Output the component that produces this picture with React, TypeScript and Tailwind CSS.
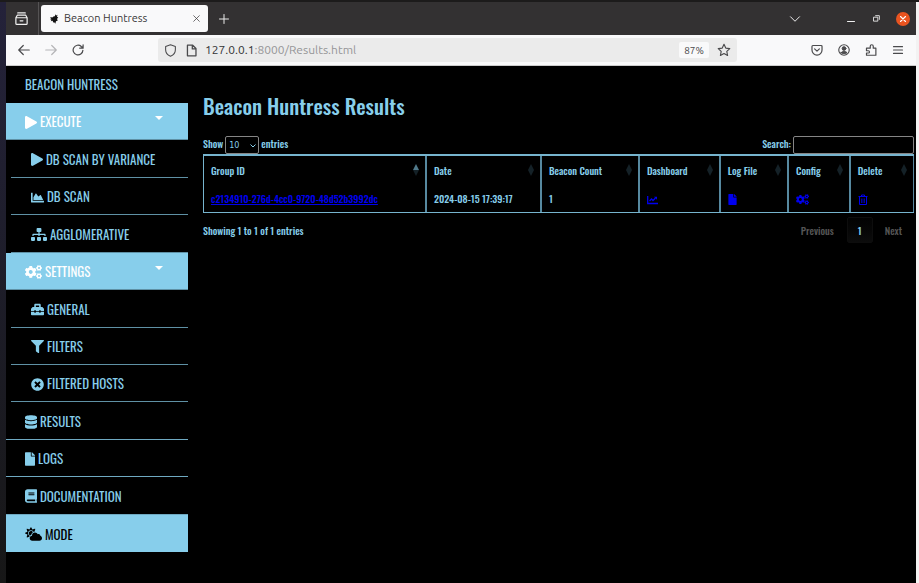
import type { ReactNode } from "react";
import {
  FaPlay, FaChartArea, FaSitemap, FaCogs, FaToolbox, FaFilter, FaTimesCircle,
  FaDatabase, FaFile, FaBook, FaCloudSun,
} from "react-icons/fa";

const condensed = "font-['Oswald','Liberation_Sans_Narrow','DejaVu_Sans_Condensed',sans-serif]";

type Item = { label: string; icon: ReactNode; kind: "top" | "sub" | "group" | "mode" };

const items: Item[] = [
  { label: "EXECUTE", icon: <FaPlay className="h-[13px] w-3" preserveAspectRatio="none" />, kind: "group" },
  { label: "DB SCAN BY VARIANCE", icon: <FaPlay className="h-[13px] w-3" preserveAspectRatio="none" />, kind: "sub" },
  { label: "DB SCAN", icon: <FaChartArea className="size-[13px]" />, kind: "sub" },
  { label: "AGGLOMERATIVE", icon: <FaSitemap className="h-[13px] w-4" />, kind: "sub" },
  { label: "SETTINGS", icon: <FaCogs className="h-[14px] w-[17px]" />, kind: "group" },
  { label: "GENERAL", icon: <FaToolbox className="size-[13px]" />, kind: "sub" },
  { label: "FILTERS", icon: <FaFilter className="size-[13px]" />, kind: "sub" },
  { label: "FILTERED HOSTS", icon: <FaTimesCircle className="size-[13px]" />, kind: "sub" },
  { label: "RESULTS", icon: <FaDatabase className="h-[14px] w-3" />, kind: "top" },
  { label: "LOGS", icon: <FaFile className="h-[14px] w-[10px]" />, kind: "top" },
  { label: "DOCUMENTATION", icon: <FaBook className="h-[14px] w-3" />, kind: "top" },
  { label: "MODE", icon: <FaCloudSun className="h-[14px] w-[17px]" />, kind: "mode" },
];

const rowStyle = {
  top: "border-b border-[#6fa9c1] pl-[19px] text-[#87ceeb]",
  sub: "ml-[5px] border-b border-[#5f91a5] pl-5 text-[#87ceeb]",
  group: "border-b border-[#5f91a5] bg-[#87ceeb] pl-[19px] text-white",
  mode: "bg-[#87ceeb] pl-[19px] text-black",
};

const columns = [
  { name: "Group ID", width: "w-[31.4%]" },
  { name: "Date", width: "w-[16.2%]" },
  { name: "Beacon Count", width: "w-[13.8%]" },
  { name: "Dashboard", width: "w-[11.4%]" },
  { name: "Log File", width: "w-[9.6%]" },
  { name: "Config", width: "w-[8.7%]" },
  { name: "Delete", width: "w-[8.9%]" },
];

function Glyph({ children, className = "size-4" }: { children: ReactNode; className?: string }) {
  return (
    <svg viewBox="0 0 16 16" className={className} fill="none" stroke="currentColor" strokeWidth="1.3" strokeLinecap="round" strokeLinejoin="round" aria-hidden="true">
      {children}
    </svg>
  );
}

function TabBar() {
  return (
    <div className="flex h-[33px] items-center bg-[#333132] text-[#f0f0f0]">
      <button aria-label="Recent browsing" className="ml-[7px] flex size-4 items-center justify-center">
        <Glyph className="size-[15px]">
          <path d="M4 2h8M2 7.200 3.500 4.500h9L14 7.200M2 7.200h12v6a1 1 0 0 1-1 1H3a1 1 0 0 1-1-1zM6.500 10.500h3" />
        </Glyph>
      </button>
      <div className="ml-[9px] h-full w-px bg-[#555354]" />
      <div className="ml-[2px] flex h-[27px] w-[167px] items-center rounded-[3px] bg-[#f9f9fa] pr-[7px] pl-[7px] text-[#3c3a3b]">
        <svg viewBox="0 0 12 12" className="size-3" fill="#111" aria-hidden="true">
          <path d="M5.500 3.500 6.800 3.200 7.600 1.200 8.300 2.400 9.500 1.800 9 4l1.300.3L9 6l.8 1.500L8 8.200 7.300 10.800 6.200 9.200 5 9.500 4.800 7.800 2.800 8.300 3.500 6.800 1.800 6 3.300 5.500 2 4l2.300.6Z" />
        </svg>
        <span className="ml-1 flex-1 text-[11px]">Beacon Huntress</span>
        <button aria-label="Close tab">
          <Glyph className="size-[9px]"><path d="m3 3 10 10M13 3 3 13" /></Glyph>
        </button>
      </div>
      <button aria-label="New tab" className="ml-[10px]">
        <Glyph className="size-3"><path d="M8 2v12M2 8h12" /></Glyph>
      </button>
      <div className="ml-auto flex items-center pr-[6px]">
        <button aria-label="List all tabs" className="mr-[46px]">
          <Glyph className="size-3"><path d="m2 5 6 6 6-6" /></Glyph>
        </button>
        <button aria-label="Minimize" className="mr-[18px]">
          <Glyph className="size-2"><path d="M1 13h14" strokeWidth="2" /></Glyph>
        </button>
        <button aria-label="Restore" className="mr-[16px]">
          <Glyph className="size-[7px]"><path d="M2 5h9v9H2zM6 1.500h8.500V10" strokeWidth="2" /></Glyph>
        </button>
        <button aria-label="Close window" className="flex size-[14px] items-center justify-center rounded-full bg-[#e95420] text-white">
          <Glyph className="size-[10px]"><path d="m4 4 8 8M12 4l-8 8" strokeWidth="1.800" /></Glyph>
        </button>
      </div>
    </div>
  );
}

function Toolbar() {
  return (
    <div className="flex h-[31px] items-center border-b border-[#cccccc] bg-[#f9f9fa] text-[#4a4a4c]">
      <div className="flex items-center gap-[15px] pl-3">
        <button aria-label="Back"><Glyph className="size-3"><path d="M15 8H1m6-6L1 8l6 6" strokeWidth="1.600" /></Glyph></button>
        <button aria-label="Forward" className="text-[#b5b5b7]"><Glyph className="size-3"><path d="M1 8h14M9 2l6 6-6 6" strokeWidth="1.600" /></Glyph></button>
        <button aria-label="Reload"><Glyph className="size-3"><path d="M14.500 8.500A6.500 6.500 0 1 1 12.400 3.300L14.500 5M14.800 1v4.500h-4.500" strokeWidth="1.600" /></Glyph></button>
      </div>
      <div className="mr-auto ml-[74px] flex h-6 w-[579px] items-center rounded-[3px] bg-[#ebebeb] px-[6px]">
        <Glyph className="size-[13px]"><path d="M8 1 14 3v4c0 4-2.500 6.500-6 8-3.500-1.500-6-4-6-8V3z" /></Glyph>
        <Glyph className="ml-2 size-[13px]"><path d="M3 1.500h6.500L13.500 5.500v9H3zM9 1.500V6h4.500" strokeWidth="1.600" /></Glyph>
        <span className="ml-[7px] flex-1 text-[12px] text-[#969698]"><span className="text-[#333335]">127.0.0.1</span>:8000/Results.html</span>
        <button className="h-4 w-[30px] rounded-[2px] bg-[#f9f9fa] text-[10px]">87%</button>
        <button aria-label="Bookmark" className="ml-[8px]">
          <Glyph className="size-[14px]"><path d="m8 1.500 2 4.300 4.600.6-3.400 3.200.9 4.700L8 12l-4.100 2.300.9-4.700L1.400 6.400 6 5.800z" /></Glyph>
        </button>
      </div>
      <div className="flex items-center gap-[15px] pr-3">
        <button aria-label="Pocket"><Glyph className="size-3"><path d="M2.500 2h11a1.200 1.200 0 0 1 1.200 1.200V8A6.700 6.700 0 0 1 1.300 8V3.200A1.200 1.200 0 0 1 2.500 2zM4.800 6.500 8 9.500l3.200-3" strokeWidth="1.600" /></Glyph></button>
        <button aria-label="Account"><Glyph className="size-3"><circle cx="8" cy="8" r="7" strokeWidth="1.500" /><circle cx="8" cy="6" r="2.500" fill="currentColor" /><path d="M4 11.500c1-2 7-2 8 0-2 2-6 2-8 0z" fill="currentColor" /></Glyph></button>
        <button aria-label="Extensions"><Glyph className="size-3"><path d="M2 5.500h5V3a2 2 0 0 1 4 0v2.500h3.500V15H2v-3h2.500a1.500 1.500 0 0 0 0-3H2z" strokeWidth="1.600" /></Glyph></button>
        <button aria-label="Menu"><Glyph className="size-3"><path d="M2 3.500h12M2 8h12M2 12.500h12" strokeWidth="1.500" /></Glyph></button>
      </div>
    </div>
  );
}

function Sidebar() {
  return (
    <nav className="w-[182px] shrink-0 text-[13px]">
      <div className="flex h-[37px] items-center pl-[19px] text-[#87ceeb]">BEACON HUNTRESS</div>
      <ul className="grid h-[449px] auto-rows-fr">
        {items.map((item) => (
          <li key={item.label} className="grid">
            <a href="#" className={"flex items-center gap-[3px] pt-[2px] whitespace-nowrap " + rowStyle[item.kind]}>
              {item.icon}
              <span>{item.label}</span>
              {item.kind === "group" && (
                <svg viewBox="0 0 8 4" className="mr-[25px] mb-2 ml-auto h-1 w-2" fill="currentColor" aria-hidden="true">
                  <path d="M0 0h8L4 4z" />
                </svg>
              )}
            </a>
          </li>
        ))}
      </ul>
    </nav>
  );
}

function SortMark({ ascending }: { ascending: boolean }) {
  return (
    <svg viewBox="0 0 6 12" className="h-3 w-[6px] shrink-0" aria-hidden="true">
      <path d="M3 0 6 6H0z" fill={ascending ? "#50798a" : "#142127"} />
      <path d="M0 6h6l-3 6z" fill="#142127" />
    </svg>
  );
}

function ChartIcon() {
  return (
    <svg viewBox="0 0 11 10" className="h-[10px] w-[11px]" fill="none" stroke="currentColor" strokeWidth="1.300" aria-hidden="true">
      <path d="M.7 1v7.500H11M2.500 6 4.500 4 6 5.500 8.500 3" />
      <path d="M7 1.800h3v3z" fill="currentColor" stroke="none" />
    </svg>
  );
}

function TrashIcon() {
  return (
    <svg viewBox="0 0 10 12" className="h-3 w-[10px]" fill="none" stroke="currentColor" aria-hidden="true">
      <path d="M.5 2.500h9M3.500 2.500v-1.500h3v1.500M1.500 2.500v8h7v-8" />
      <path d="M3.500 4.500v4.500M5 4.500v4.500M6.500 4.500v4.500" strokeWidth=".7" />
    </svg>
  );
}

function Results() {
  const cell = "border-r-2 border-[#5789a0] pr-[6px] pb-[2px] pl-[7px] last:border-r";
  const link = "inline-block align-middle text-[#0000ee]";
  return (
    <main className="min-w-0 flex-1 pr-[2px] pl-[15px] text-[10px] font-medium text-[#87ceeb]">
      <h1 className="mt-6 h-8 text-[21px] leading-8 font-medium">Beacon Huntress Results</h1>
      <div className="mt-[14px] flex h-[18px] items-start justify-between leading-4">
        <label className="flex gap-[2px]">
          Show
          <span className="relative">
            <select className="block h-[18px] w-[34px] appearance-none rounded-[2px] border border-[#858585] bg-black pt-px pl-[3px] font-['DejaVu_Sans',sans-serif] text-[8px] font-normal">
              <option>10</option>
            </select>
            <svg viewBox="0 0 6 4" className="pointer-events-none absolute top-2 right-[3px] h-1 w-[6px]" fill="none" stroke="currentColor" aria-hidden="true">
              <path d="m.5.5 2.500 2.500L5.500.5" />
            </svg>
          </span>
          entries
        </label>
        <label className="flex gap-[2px]">
          Search:
          <input type="search" className="h-[18px] w-[121px] rounded-[2px] border border-[#858585] bg-black px-1" />
        </label>
      </div>
      <table className="w-full table-fixed border-separate border-spacing-0 border-t-2 border-b border-l border-[#76b4ce] text-left">
        <thead>
          <tr className="h-[30px]">
            {columns.map((column, index) => (
              <th key={column.name} className={column.width + " font-medium " + cell}>
                <div className="flex items-center justify-between whitespace-nowrap">
                  {column.name}
                  <SortMark ascending={index === 0} />
                </div>
              </th>
            ))}
          </tr>
        </thead>
        <tbody>
          <tr className="h-[26px]">
            <td className={cell}><a href="#" className="text-[#0000ee] underline">c2134910-276d-4cc0-9720-48d52b3992dc</a></td>
            <td className={cell}>2024-08-15 17:39:17</td>
            <td className={cell}>1</td>
            <td className={cell}><a href="#" aria-label="Dashboard" className={link}><ChartIcon /></a></td>
            <td className={cell}><a href="#" aria-label="Log file" className={link}><FaFile className="h-[11px] w-[9px]" /></a></td>
            <td className={cell}><a href="#" aria-label="Config" className={link}><FaCogs className="h-[11px] w-[13px]" /></a></td>
            <td className={cell}><a href="#" aria-label="Delete" className={link}><TrashIcon /></a></td>
          </tr>
        </tbody>
      </table>
      <div className="flex items-center justify-between pt-1">
        <span>Showing 1 to 1 of 1 entries</span>
        <div className="flex items-center text-[#555555]">
          <button>Previous</button>
          <button className="mr-3 ml-[13px] h-[26px] w-[26px] rounded-[2px] border border-[#0d0d0d] bg-linear-to-b from-[#030303] to-[#0c0c0c] text-[#87ceeb]">1</button>
          <button className="mr-3">Next</button>
        </div>
      </div>
    </main>
  );
}

export default function App() {
  return (
    <div className="flex min-h-screen border-t-2 border-[#1c1b1b] bg-[#1d1c2c] font-['Ubuntu','Noto_Sans',sans-serif]">
      <div className="w-[6px] shrink-0 bg-linear-to-b from-[#24223a] to-[#171717]" />
      <div className="flex min-w-0 flex-1 flex-col bg-black">
        <TabBar />
        <Toolbar />
        <div className={"flex flex-1 " + condensed}>
          <Sidebar />
          <Results />
        </div>
      </div>
      <div className="w-[3px] shrink-0 bg-[#f3f2f2]" />
    </div>
  );
}
